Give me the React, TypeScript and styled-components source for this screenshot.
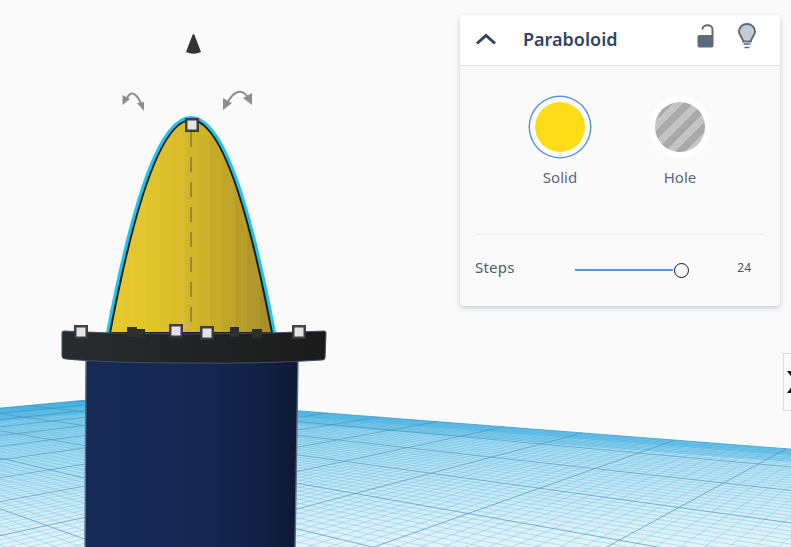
import React, { useMemo } from "react";
import styled, { createGlobalStyle } from "styled-components";

const GlobalStyle = createGlobalStyle`
  html, body {
    margin: 0;
    padding: 0;
    background: #fafafa;
    overflow: hidden;
  }
  * {
    box-sizing: border-box;
  }
`;

const Workplane = styled.div`
  position: relative;
  width: 791px;
  height: 547px;
  overflow: hidden;
  background: #fafafa;
  font-family: "Noto Sans", "Open Sans", sans-serif;
`;

const Scene = styled.svg`
  display: block;
  width: 791px;
  height: 547px;
`;

const Inspector = styled.section`
  position: absolute;
  top: 15px;
  left: 460px;
  width: 320px;
  height: 291px;
  display: flex;
  flex-direction: column;
  background: #fafafa;
  border-radius: 4px;
  box-shadow: 0 2px 5px rgba(70, 80, 110, 0.28);
`;

const InspectorHeader = styled.header`
  height: 51px;
  display: flex;
  align-items: center;
  padding: 0 24px 2px 15px;
  background: #ffffff;
  border-bottom: 1px solid #e2e2e2;
  border-radius: 4px 4px 0 0;
`;

const ShapeTitle = styled.h1`
  flex: 1;
  margin: 0 0 0 26px;
  color: #2f4560;
  font-size: 18px;
  font-weight: 600;
`;

const HeaderIcons = styled.div`
  display: flex;
  align-items: center;
  gap: 24px;
  padding-bottom: 6px;
`;

const IconBox = styled.svg`
  display: block;
`;

const ModeOptions = styled.div`
  display: flex;
  justify-content: center;
  padding-top: 36px;
`;

const ModeOption = styled.div`
  width: 120px;
  display: flex;
  flex-direction: column;
  align-items: center;
  gap: 15px;
`;

const Swatch = styled.div<{ $selected?: boolean; $hole?: boolean }>`
  width: 50px;
  height: 50px;
  border-radius: 50%;
  background: ${(p) =>
    p.$hole
      ? "repeating-linear-gradient(135deg, #c5c5c5 0 7px, #a9a9a9 7px 14px)"
      : "#ffdc17"};
  box-shadow: ${(p) =>
    p.$selected
      ? "0 0 0 5px #ffffff, 0 0 0 6.5px #5b95dc"
      : "0 0 0 6px #ffffff"};
`;

const ModeLabel = styled.span`
  color: #5a6675;
  font-size: 15px;
  line-height: 20px;
`;

const Divider = styled.hr`
  width: 290px;
  margin: 47px 0 0 15px;
  border: 0;
  border-top: 1px solid #ececec;
`;

const PropertyRow = styled.div`
  display: flex;
  align-items: center;
  height: 66px;
  padding: 0 29px 2px 15px;
`;

const PropertyName = styled.span`
  width: 100px;
  color: #4f5d6e;
  font-size: 15px;
  letter-spacing: 0.2px;
`;

const SliderTrack = styled.div`
  position: relative;
  width: 98px;
  height: 2px;
  margin-top: 5px;
  background: #5a93d8;
`;

const SliderThumb = styled.div`
  position: absolute;
  top: -6px;
  left: 99px;
  width: 15px;
  height: 15px;
  border: 1.5px solid #111111;
  border-radius: 50%;
  background: #fafafa;
`;

const PropertyValue = styled.span`
  margin-left: auto;
  color: #44566c;
  font-size: 12px;
`;

const ViewCubeStub = styled.div`
  position: absolute;
  top: 353px;
  left: 783px;
  width: 20px;
  height: 58px;
  display: flex;
  flex-direction: column;
  align-items: flex-start;
  justify-content: center;
  gap: 6px;
  padding-left: 3px;
  background: #fafafa;
  border: 1px solid #dcdce2;
`;

const StubArrow = styled.div<{ $up?: boolean }>`
  width: 0;
  height: 0;
  border-left: 6px solid transparent;
  border-right: 6px solid transparent;
  ${(p) => (p.$up ? "border-bottom" : "border-top")}: 8px solid #111111;
`;

// ground plane as a homography: corner + two vanishing points
const CORNER: [number, number] = [120, 397];
const VP_U: [number, number] = [-434, 354];
const VP_V: [number, number] = [1036, 312];
const MAJOR = 0.0455;
const SUB = 10;
const END = 0.9;

function project(s: number, t: number): string {
  const w = 1 - s - t;
  const x = (CORNER[0] - s * VP_U[0] - t * VP_V[0]) / w;
  const y = (CORNER[1] - s * VP_U[1] - t * VP_V[1]) / w;
  return `${x.toFixed(1)} ${y.toFixed(1)}`;
}

function gridPaths() {
  let minor = "";
  let major = "";
  const count = 19 * SUB;
  const step = MAJOR / SUB;
  for (let i = 0; i <= count; i++) {
    const v = i * step;
    const rest = END - v > 0 ? END - v : 0;
    const a = `M${project(v, 0)}L${project(v, rest)}`;
    const b = `M${project(0, v)}L${project(rest, v)}`;
    if (i % SUB === 0) major += a + b;
    else minor += a + b;
  }
  return { minor, major };
}

const PLATE = `M${project(0, 0)}L${project(END, 0)}L${project(END / 2, END / 2)}L${project(0, END)}Z`;
const FAR_EDGES = `M${project(0, END)}L${project(0, 0)}L${project(END, 0)}`;
const CONE = "M110 333Q191 -93 272 333Z";

// the cone is faceted, so its shading goes in flat strips
const CONE_STRIPS = [
  "#e6ca2d", "#e4c82d", "#e2c62c", "#dfc32c", "#dcc02c", "#d8bc2b",
  "#d3b72b", "#cdb22b", "#c6ab2a", "#bfa52a", "#b89e29", "#b09729", "#a88f28",
];

const Ground: React.FC = () => {
  const { minor, major } = useMemo(gridPaths, []);
  return (
    <g filter="url(#soften)">
      <clipPath id="plateClip">
        <path d={PLATE} />
      </clipPath>
      <path d={PLATE} fill="url(#plateFill)" />
      <g clipPath="url(#plateClip)">
        <path d={FAR_EDGES} fill="none" stroke="#4fb3e4" strokeOpacity={0.4} strokeWidth={26} />
        <path d={FAR_EDGES} fill="none" stroke="#4fb3e4" strokeOpacity={0.5} strokeWidth={12} />
      </g>
      <path d={minor} stroke="#3aaede" strokeOpacity={0.5} strokeWidth={0.55} fill="none" />
      <path d={major} stroke="#3f92bd" strokeOpacity={0.75} strokeWidth={0.9} fill="none" />
    </g>
  );
};

const Handle: React.FC<{ x: number; y: number }> = ({ x, y }) => (
  <rect
    x={x - 5.75}
    y={y - 5.75}
    width={11.5}
    height={11.5}
    fill="#e4e4e4"
    stroke="#333333"
    strokeOpacity={0.92}
    strokeWidth={2.5}
  />
);

const RotateArrow: React.FC<{ arc: string; heads: string }> = ({ arc, heads }) => (
  <g>
    <path d={arc} fill="none" stroke="#8e8e8e" strokeWidth={2} />
    <path d={heads} fill="#8e8e8e" />
  </g>
);

const App: React.FC = () => (
  <Workplane>
    <GlobalStyle />
    <Scene viewBox="0 0 791 547">
      <defs>
        <filter id="soften" x="-5%" y="-5%" width="110%" height="110%">
          <feGaussianBlur stdDeviation="0.4" />
        </filter>
        <linearGradient id="plateFill" x1="0" x2="0" y1="400" y2="547" gradientUnits="userSpaceOnUse">
          <stop offset="0" stopColor="#a4d9f0" />
          <stop offset="0.5" stopColor="#c0e5f4" />
          <stop offset="1" stopColor="#e2f4fa" />
        </linearGradient>
        <linearGradient id="coneFill" x1="110" x2="272" y1="0" y2="0" gradientUnits="userSpaceOnUse">
          {CONE_STRIPS.map((color, i) => (
            <React.Fragment key={i}>
              <stop offset={i / CONE_STRIPS.length} stopColor={color} />
              <stop offset={(i + 1) / CONE_STRIPS.length} stopColor={color} />
            </React.Fragment>
          ))}
        </linearGradient>
        <linearGradient id="cylFill" x1="86" x2="297" y1="0" y2="0" gradientUnits="userSpaceOnUse">
          <stop offset="0" stopColor="#162a56" />
          <stop offset="0.6" stopColor="#152650" />
          <stop offset="0.85" stopColor="#121f42" />
          <stop offset="1" stopColor="#0e1833" />
        </linearGradient>
        <linearGradient id="ringFill" x1="62" x2="326" y1="0" y2="0" gradientUnits="userSpaceOnUse">
          <stop offset="0" stopColor="#2a2b2d" />
          <stop offset="0.6" stopColor="#212223" />
          <stop offset="1" stopColor="#1a1a1a" />
        </linearGradient>
      </defs>

      <Ground />

      {/* cylinder */}
      <path
        d="M86 360L85 550L295 550L298 360Z"
        fill="url(#cylFill)"
        stroke="#5d6e85"
        strokeWidth={1.4}
      />

      {/* paraboloid */}
      <path d={CONE} fill="none" stroke="#1fc4ee" strokeWidth={8} />
      <path d={CONE} fill="url(#coneFill)" stroke="#1c1c1c" strokeWidth={2} />
      <path d="M191 132V332" stroke="#8a7a3a" strokeWidth={1.6} strokeDasharray="15 10" />

      {/* disc under the cone */}
      <path
        d="M64 331L110 333L190 334L270 333L324 331Q326 331 326 333L325 358Q325 360 322 360Q260 364 190 363Q110 363 66 359Q62 359 62 356L62 333Q62 331 64 331Z"
        fill="url(#ringFill)"
        stroke="#3d5068"
        strokeWidth={1}
      />
      <rect x={127} y={327} width={10} height={10} fill="#2e2e2e" />
      <rect x={136} y={329} width={9} height={9} fill="#2e2e2e" />
      <rect x={230} y={327} width={9} height={10} fill="#2e2e2e" />
      <rect x={252} y={329} width={10} height={9} fill="#2e2e2e" />

      <Handle x={81} y={332} />
      <Handle x={176} y={331} />
      <Handle x={207} y={333} />
      <Handle x={299} y={332} />
      <Handle x={192} y={125} />

      {/* lift cone */}
      <path d="M192.5 35Q193.5 33 194.5 35L201 52Q193.5 55.5 186 52Z" fill="#333333" />

      {/* rotate handles */}
      <RotateArrow
        arc="M127 98Q133 87 141 103"
        heads="M122.5 95L122.5 105L130 99ZM137 103L144 102L144 111Z"
      />
      <RotateArrow
        arc="M227 103Q238 84 248 97"
        heads="M223 98L223 110L232 103ZM252 93L252 105L243 98Z"
      />
    </Scene>

    <Inspector>
      <InspectorHeader>
        <IconBox width="22" height="14" viewBox="0 0 22 14">
          <path d="M2 11.5L11 3.5L20 11.5" fill="none" stroke="#2f4560" strokeWidth={3} />
        </IconBox>
        <ShapeTitle>Paraboloid</ShapeTitle>
        <HeaderIcons>
          <IconBox width="17" height="24" viewBox="0 0 17 24">
            <path d="M5.5 5.5C5.5 -0.2 15.5 -0.2 15.5 5.5V12" fill="none" stroke="#5a6b7e" strokeWidth={2} />
            <rect x="0.5" y="11" width="16" height="12.5" rx="2" fill="#5a6b7e" />
          </IconBox>
          <IconBox width="18" height="26" viewBox="0 0 18 26">
            <path
              d="M9 1C4.5 1 1 4.2 1 8.5C1 12.5 4.6 14.5 5.2 18.5H12.8C13.4 14.5 17 12.5 17 8.5C17 4.2 13.5 1 9 1Z"
              fill="#c3ccd4"
              stroke="#5a6b7e"
              strokeWidth={2}
            />
            <path d="M5.5 21H12.5M6.5 24.5H11.5" stroke="#5a6b7e" strokeWidth={1.6} />
          </IconBox>
        </HeaderIcons>
      </InspectorHeader>

      <ModeOptions>
        <ModeOption>
          <Swatch $selected />
          <ModeLabel>Solid</ModeLabel>
        </ModeOption>
        <ModeOption>
          <Swatch $hole />
          <ModeLabel>Hole</ModeLabel>
        </ModeOption>
      </ModeOptions>

      <Divider />

      <PropertyRow>
        <PropertyName>Steps</PropertyName>
        <SliderTrack>
          <SliderThumb />
        </SliderTrack>
        <PropertyValue>24</PropertyValue>
      </PropertyRow>
    </Inspector>

    <ViewCubeStub>
      <StubArrow />
      <StubArrow $up />
    </ViewCubeStub>
  </Workplane>
);

export default App;
